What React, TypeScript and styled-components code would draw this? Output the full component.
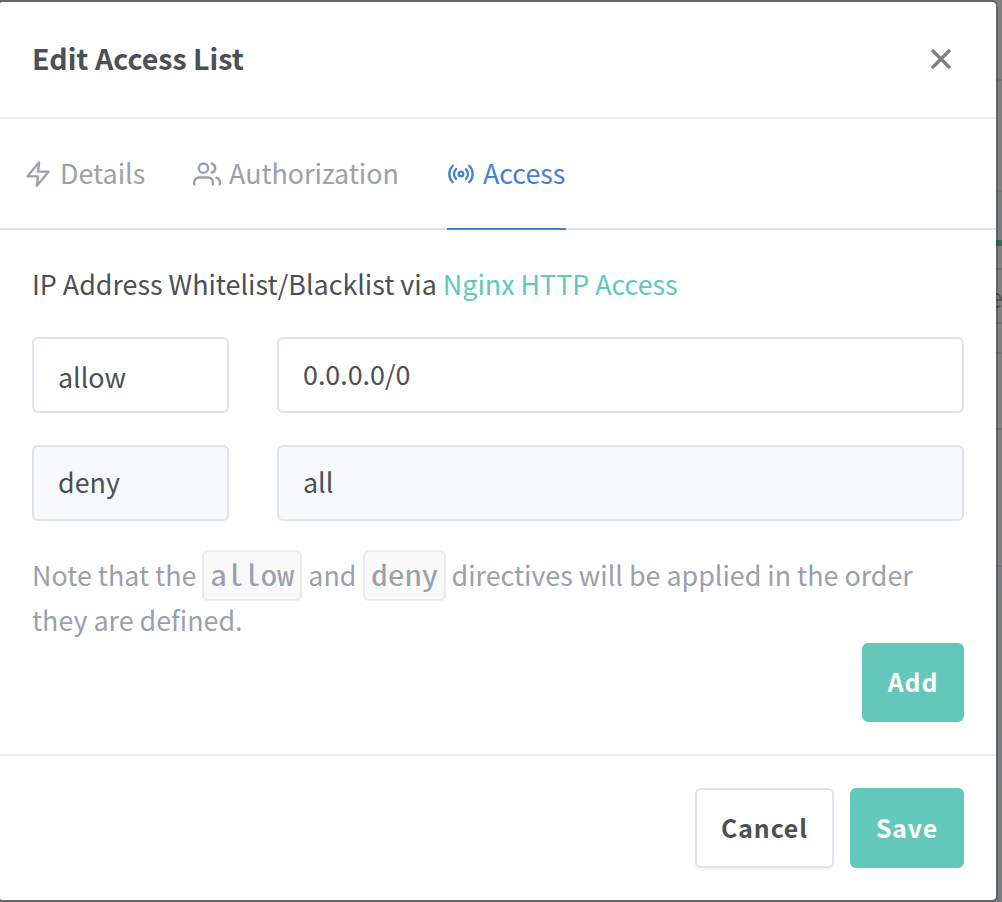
import React from 'react';
import styled, { createGlobalStyle, css } from 'styled-components';

const sans = `'Noto Sans CJK SC', 'Noto Sans', sans-serif`;

const GlobalStyle = createGlobalStyle`
  * { box-sizing: border-box; }
  body {
    margin: 0;
    background: #808080;
    font-family: ${sans};
    font-size: 26.85px;
    color: #495057;
    overflow: hidden;
  }
`;

const Screen = styled.div`
  display: flex;
  width: 1002px;
  height: 902px;
  padding: 2px 0;
  overflow: hidden;
`;

const Modal = styled.section`
  position: relative;
  z-index: 1;
  display: flex;
  flex-direction: column;
  width: 996px;
  height: 898px;
  background: #fff;
  border-radius: 2px 4px 4px 2px;
  box-shadow: 0 0 0 2px rgba(0, 0, 0, 0.2);
`;

const Behind = styled.div`
  display: flex;
  flex-direction: column;
  width: 6px;
  margin-top: -2px;
`;

const Strip = styled.div<{ $h: number; $color: string }>`
  flex: none;
  height: ${(p) => p.$h}px;
  background: ${(p) => p.$color};
  line-height: 53px;
  color: #4f5255;
  text-indent: -8px;
`;

const Header = styled.header`
  display: flex;
  align-items: center;
  justify-content: space-between;
  height: 117px;
  padding: 0 45px 2px 32px;
  border-bottom: 2px solid #e9ecef;
`;

const Title = styled.h1`
  margin: 0 0 1px;
  font-size: 28.6px;
  font-weight: 700;
  line-height: 40px;
`;

const CloseButton = styled.button`
  display: flex;
  padding: 0;
  border: 0;
  background: none;
  color: #808080;
`;

const Tabs = styled.nav`
  display: flex;
  gap: 48px;
  height: 111px;
  padding: 0 24px;
  border-bottom: 2px solid #dee2e6;
`;

const Tab = styled.a<{ $active?: boolean; $w: number }>`
  display: flex;
  align-items: center;
  gap: 8px;
  width: ${(p) => p.$w}px;
  height: 111px;
  padding-bottom: 3px;
  white-space: nowrap;
  color: #9aa0ac;
  border-bottom: 2px solid transparent;
  ${(p) =>
    p.$active &&
    css`
      color: #467fcf;
      border-bottom-color: #467fcf;
    `}
`;

const Icon = styled.svg`
  flex: none;
  width: 28px;
  height: 28px;
  margin-top: 4px;
  fill: none;
  stroke: currentColor;
  stroke-width: 2;
  stroke-linecap: round;
  stroke-linejoin: round;
`;

const Body = styled.div`
  display: flex;
  flex-direction: column;
  height: 526px;
  padding: 31px 32px 0;
  border-bottom: 2px solid #e9ecef;
`;

const Intro = styled.p`
  margin: 0 0 31px;
  line-height: 45px;
  white-space: nowrap;
`;

const Link = styled.a`
  color: #5ec9b9;
`;

const Row = styled.div`
  display: grid;
  grid-template-columns: 197px 687px;
  gap: 48px;
  margin-bottom: 32px;
`;

const Field = styled.div<{ $disabled?: boolean; $drop?: number }>`
  height: 76px;
  padding: ${(p) => p.$drop ?? 0}px 24px 0;
  line-height: 70px;
  border: 2px solid #e0e3eb;
  border-radius: 6px;
  background: ${(p) => (p.$disabled ? '#f8f9fa' : '#fff')};
`;

const Note = styled.p`
  height: 91px;
  margin: -1px 0 0;
  line-height: 45px;
  color: #9aa0ac;
  white-space: nowrap;
`;

const Code = styled.code<{ $w: number }>`
  display: inline-block;
  width: ${(p) => p.$w}px;
  height: 51px;
  margin: -4px 0 -6px;
  padding-left: 6px;
  line-height: 42px;
  border: 2px solid #ebebeb;
  border-radius: 6px;
  background: #f9f9f9;
  font-family: 'Noto Sans Mono CJK SC', 'DejaVu Sans Mono', monospace;
  font-size: 29px;
`;

const WideGlyphs = styled.span`
  display: inline-block;
  transform: scaleX(1.16);
  transform-origin: left;
`;

const Button = styled.button<{ $outline?: boolean; $w: number; $h?: number }>`
  width: ${(p) => p.$w}px;
  height: ${(p) => p.$h ?? 80}px;
  padding: 0 0 3px;
  border: 2px solid ${(p) => (p.$outline ? '#e0e3eb' : '#63c8b9')};
  border-radius: 6px;
  background: ${(p) => (p.$outline ? '#fff' : '#63c8b9')};
  color: ${(p) => (p.$outline ? '#495057' : '#fff')};
  font-family: ${sans};
  font-size: 24.8px;
  font-weight: 700;
  letter-spacing: 0.9px;
  ${(p) => p.$outline && 'box-shadow: 0 2px 2px rgba(0, 0, 0, 0.05);'}
`;

const AddRow = styled.div`
  display: flex;
  justify-content: flex-end;
`;

const Footer = styled.footer`
  display: flex;
  justify-content: flex-end;
  gap: 16px;
  padding: 32px 32px 0;
`;

const strips: [number, string, string?][] = [
  [79, '#808080'],
  [2, '#747577'],
  [109, '#808080'],
  [2, '#747577'],
  [48, '#7b7c7f'],
  [6, '#31695f'],
  [22, '#808080'],
  [2, '#707274'],
  [52, '#808080', 'e'],
  [2, '#707274'],
  [28, '#808080'],
  [2, '#707274'],
  [74, '#808080'],
  [2, '#707274'],
  [135, '#808080'],
  [2, '#747577'],
  [335, '#7b7c7f'],
];

export default function App() {
  return (
    <>
      <GlobalStyle />
      <Screen>
        <Modal>
          <Header>
            <Title>Edit Access List</Title>
            <CloseButton aria-label="Close">
              <svg width="20" height="20" viewBox="0 0 20 20" fill="none" stroke="currentColor" strokeWidth="3.4" strokeLinecap="round">
                <path d="M2 2 18 18M18 2 2 18" />
              </svg>
            </CloseButton>
          </Header>
          <Tabs>
            <Tab $w={121}>
              <Icon viewBox="0 0 24 24">
                <polygon points="13 2 3 14 12 14 11 22 21 10 12 10 13 2" />
              </Icon>
              Details
            </Tab>
            <Tab $w={206}>
              <Icon viewBox="0 0 24 24">
                <path d="M17 21v-2a4 4 0 0 0-4-4H5a4 4 0 0 0-4 4v2" />
                <circle cx="9" cy="7" r="4" />
                <path d="M23 21v-2a4 4 0 0 0-3-3.87M16 3.13a4 4 0 0 1 0 7.75" />
              </Icon>
              Authorization
            </Tab>
            <Tab $w={119} $active>
              <Icon viewBox="0 0 24 24">
                <circle cx="12" cy="12" r="2" />
                <path d="M16.24 7.76a6 6 0 0 1 0 8.49m-8.48-.01a6 6 0 0 1 0-8.49m11.31-2.82a10 10 0 0 1 0 14.14m-14.14 0a10 10 0 0 1 0-14.14" />
              </Icon>
              Access
            </Tab>
          </Tabs>
          <Body>
            <Intro>
              IP Address Whitelist/Blacklist via <Link>Nginx HTTP Access</Link>
            </Intro>
            <Row>
              <Field $drop={3}>allow</Field>
              <Field>0.0.0.0/0</Field>
            </Row>
            <Row>
              <Field $disabled>deny</Field>
              <Field $disabled>all</Field>
            </Row>
            <Note>
              Note that the <Code $w={100}><WideGlyphs>allow</WideGlyphs></Code> and{' '}
              <Code $w={83}><WideGlyphs>deny</WideGlyphs></Code> directives will be applied in the order
              <br />
              they are defined.
            </Note>
            <AddRow>
              <Button $w={102} $h={79}>Add</Button>
            </AddRow>
          </Body>
          <Footer>
            <Button $outline $w={139}>Cancel</Button>
            <Button $w={114}>Save</Button>
          </Footer>
        </Modal>
        <Behind>
          {strips.map(([h, color, text], i) => (
            <Strip key={i} $h={h} $color={color}>
              {text}
            </Strip>
          ))}
        </Behind>
      </Screen>
    </>
  );
}
